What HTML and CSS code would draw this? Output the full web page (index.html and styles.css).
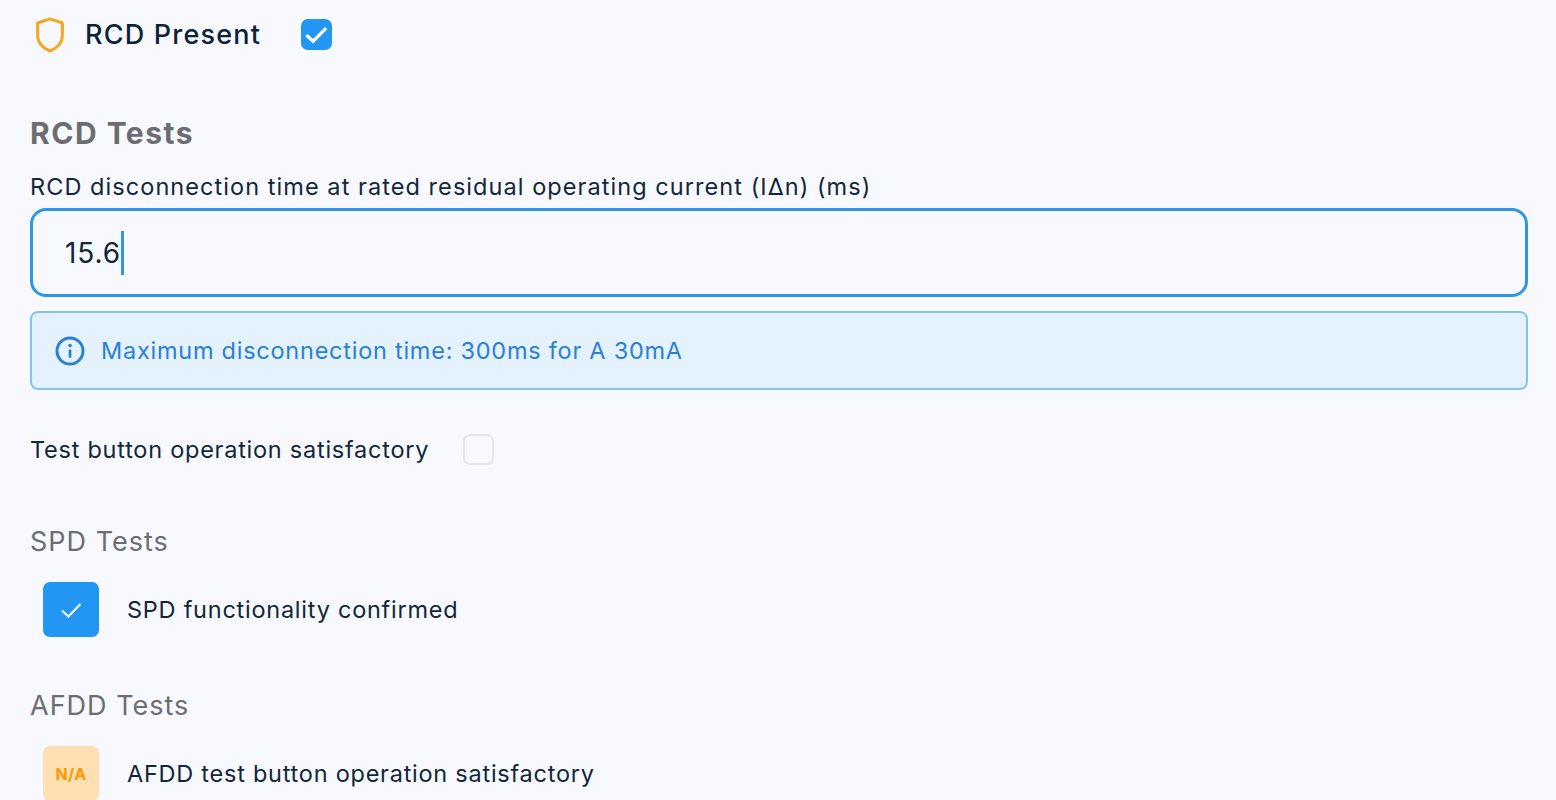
FILE: index.html
```html
<!DOCTYPE html>
<html lang="en">
<head>
    <meta charset="UTF-8">
    <meta name="viewport" content="width=device-width, initial-scale=1.0">
    <title>RCD Tests</title>
    <link rel="stylesheet" href="styles.css">
</head>
<body>
    <div class="rcd-header">
        <svg class="shield-icon" viewBox="0 0 28 36" width="28" height="36" fill="none">
            <path d="M14 1.8 L26.4 6 V18 C26.4 25.5 21 31 14 34 C7 31 1.6 25.5 1.6 18 V6 Z" stroke="#f5a623" stroke-width="3" stroke-linejoin="round"/>
        </svg>
        <span class="rcd-title">RCD Present</span>
        <span class="check-small">
            <svg viewBox="0 0 32 32" width="31" height="31" fill="none">
                <path d="M5.5 16.5 L12.5 23 L26 9.5" stroke="#fff" stroke-width="3.4"/>
            </svg>
        </span>
    </div>

    <h2 class="section-title">RCD Tests</h2>
    <label class="field-label">RCD disconnection time at rated residual operating current (I&#916;n) (ms)</label>
    <div class="text-input"><span>15.6</span><span class="caret"></span></div>

    <div class="info-box">
        <svg class="info-icon" viewBox="0 0 30 30" width="30" height="30" fill="none">
            <circle cx="15" cy="15" r="13" stroke="#2b7fd4" stroke-width="3"/>
            <rect x="13.6" y="13.4" width="2.8" height="8.4" rx="1" fill="#2b7fd4"/>
            <circle cx="15" cy="9.6" r="1.8" fill="#2b7fd4"/>
        </svg>
        <span>Maximum disconnection time: 300ms for A 30mA</span>
    </div>

    <div class="test-button-row">
        <span>Test button operation satisfactory</span>
        <span class="check-empty"></span>
    </div>

    <h3 class="sub-title spd-title">SPD Tests</h3>
    <div class="test-row">
        <span class="status-box status-pass">
            <svg viewBox="0 0 24 24" width="24" height="24" fill="none">
                <path d="M3 12.5 L9.3 18.5 L21.5 6" stroke="#fff" stroke-width="2"/>
            </svg>
        </span>
        <span>SPD functionality confirmed</span>
    </div>

    <h3 class="sub-title afdd-title">AFDD Tests</h3>
    <div class="test-row">
        <span class="status-box status-na">N/A</span>
        <span>AFDD test button operation satisfactory</span>
    </div>
</body>
</html>
```

FILE: styles.css
```css
html, body {
    height: 800px;
    overflow: hidden;
}

body {
    font-family: Inter, "Noto Sans", sans-serif;
    margin: 0;
    padding: 0 28px 0 30px;
    background: #f7f9fe;
    color: #12263a;
}

.rcd-header {
    display: flex;
    align-items: center;
    height: 69px;
    padding-left: 6px;
}

.shield-icon {
    flex-shrink: 0;
}

.rcd-title {
    margin-left: 21px;
    font-size: 27px;
    font-weight: 500;
    letter-spacing: 1.2px;
    color: #0c2238;
}

.check-small {
    display: flex;
    width: 31px;
    height: 31px;
    margin-left: 40px;
    border-radius: 7px;
    background: #2196f3;
}

.section-title {
    margin: 44px 0 0;
    font-size: 30px;
    line-height: 40px;
    font-weight: 700;
    letter-spacing: 1.5px;
    color: #6b6d70;
}

.field-label {
    display: block;
    margin-top: 19px;
    font-size: 23.5px;
    line-height: 30px;
    font-weight: 400;
    letter-spacing: 1.06px;
}

.text-input {
    display: flex;
    align-items: center;
    box-sizing: border-box;
    height: 89px;
    margin-top: 6px;
    padding-left: 32px;
    border: 3px solid #2f95e8;
    border-radius: 16px;
    font-size: 28px;
    letter-spacing: 0.9px;
}

.caret {
    width: 3px;
    height: 44px;
    background: #2f95e8;
}

.info-box {
    display: flex;
    align-items: center;
    gap: 16px;
    box-sizing: border-box;
    height: 79px;
    margin-top: 14px;
    padding-left: 23px;
    background: #e3f2fd;
    border: 2px solid #85c2f0;
    border-radius: 8px;
    color: #2b7fd4;
    font-size: 23.5px;
    letter-spacing: 0.75px;
}

.test-button-row {
    display: flex;
    align-items: center;
    gap: 34px;
    height: 34px;
    margin-top: 42px;
    font-size: 23.5px;
    letter-spacing: 0.75px;
}

.check-empty {
    box-sizing: border-box;
    width: 31px;
    height: 31px;
    border: 2px solid #e3e6ea;
    border-radius: 7px;
}

.sub-title {
    margin: 0;
    font-size: 27px;
    line-height: 36px;
    font-weight: 400;
    letter-spacing: 1px;
    color: #6b6d70;
}

.spd-title {
    margin-top: 58px;
}

.afdd-title {
    margin-top: 51px;
}

.test-row {
    display: flex;
    align-items: center;
    gap: 28px;
    margin-top: 22px;
    padding-left: 13px;
    font-size: 23.5px;
    letter-spacing: 0.75px;
}

.status-box {
    display: flex;
    align-items: center;
    justify-content: center;
    flex-shrink: 0;
    width: 56px;
    height: 55px;
    border-radius: 7px;
}

.status-pass {
    background: #2196f3;
}

.status-na {
    background: #ffe0b2;
    color: #ff9800;
    font-size: 16px;
    font-weight: 700;
    letter-spacing: 0.4px;
}
```
